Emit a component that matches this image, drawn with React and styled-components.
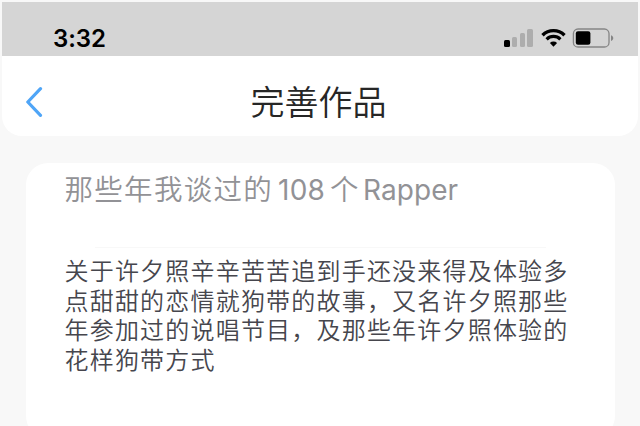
import React from 'react'
import styled, { createGlobalStyle } from "styled-components"


const GlobalStyle = createGlobalStyle`
    * {
        box-sizing: border-box;
    }
    body {
        margin: 0;
        overflow: hidden;
        background-color: #f8f8f8;
        font-family: Inter, "Noto Sans CJK SC", sans-serif;
    }
`;

const Screen = styled.div`
    height: 426px;
    padding: 2px 2px 0;
    overflow: hidden;
    background-color: #f8f8f8;
`;

const Top = styled.div`
    height: 134px;
    background-color: white;
    border-radius: 0 0 20px 20px;
`;

const StatusBar = styled.div`
    height: 54px;
    padding: 21px 24px 0 51px;
    display: flex;
    justify-content: space-between;
    background-color: #d5d5d5;
`;

const Time = styled.div`
    font-size: 24px;
    line-height: 32px;
    font-weight: 600;
    letter-spacing: -0.1px;
    color: black;
`;

const StatusIcons = styled.div`
    display: flex;
    align-items: flex-start;
    padding-top: 5px;
`;

const Signal = styled.div`
    height: 19px;
    display: flex;
    align-items: flex-end;
    gap: 2.2px;
    margin-right: 8px;
`;

const Bar = styled.div`
    width: 5.6px;
    height: ${props=>props.$height}px;
    border-radius: 1.5px;
    background-color: ${props=>props.$on ? "black" : "#adadad"};
`;

const Wifi = styled.svg`
    width: 25px;
    height: 19px;
    margin-right: 6px;
`;

const Battery = styled.svg`
    width: 42px;
    height: 20px;
`;

const NavBar = styled.div`
    height: 80px;
    padding: 0 24px;
    display: grid;
    grid-template-columns: 40px 1fr 40px;
    align-items: center;
`;

const Back = styled.svg`
    width: 18px;
    height: 32px;
    margin-top: 12px;
`;

const NavTitle = styled.h1`
    margin: 13px 3px 0 0;
    font-size: 34px;
    line-height: 44px;
    font-weight: 350;
    text-align: center;
    color: #262626;
`;

const Card = styled.div`
    height: 275px;
    margin: 27px 23.5px 0;
    padding: 0 39px;
    background-color: white;
    border-radius: 22px;
`;

const WorkTitle = styled.div`
    height: 84px;
    padding-top: 7px;
    font-size: 28.5px;
    line-height: 40px;
    font-weight: 350;
    letter-spacing: 1.3px;
    white-space: nowrap;
    color: #929296;
`;

const Latin = styled.span`
    margin: 0 ${props=>props.$after}px 0 ${props=>props.$before}px;
    font-family: Inter, sans-serif;
    font-size: 28px;
    font-weight: 400;
    letter-spacing: ${props=>props.$spacing}px;
`;

const Divider = styled.div`
    height: 1px;
    margin: 0 30px;
    background-color: #f8f8f8;
`;

const Summary = styled.p`
    margin: 9px 0 0;
    font-size: 24px;
    line-height: 29.7px;
    font-weight: 350;
    letter-spacing: 1.2px;
    white-space: nowrap;
    color: #46464d;
`;

const lines = [
    "关于许夕照辛辛苦苦追到手还没来得及体验多",
    "点甜甜的恋情就狗带的故事，又名许夕照那些",
    "年参加过的说唱节目，及那些年许夕照体验的",
    "花样狗带方式",
];


const App = () => {
  return (
    <Screen>
        <GlobalStyle/>
        <Top>
            <StatusBar>
                <Time>3:32</Time>
                <StatusIcons>
                    <Signal>
                        <Bar $height={7} $on/>
                        <Bar $height={10}/>
                        <Bar $height={14}/>
                        <Bar $height={18}/>
                    </Signal>
                    <Wifi viewBox="0 0 25 19" fill="none" stroke="black">
                        <path d="M1.5 7.2a15.6 15.6 0 0 1 22 0" strokeWidth="3.4"/>
                        <path d="M5.6 11.3a9.8 9.8 0 0 1 13.8 0" strokeWidth="3.2"/>
                        <path d="M8.9 15.1a5.1 5.1 0 0 1 7.2 0L12.5 18.7Z" fill="black" stroke="none"/>
                    </Wifi>
                    <Battery viewBox="0 0 42 20">
                        <rect x="1.4" y="1" width="35.6" height="18" rx="4.6" fill="none" stroke="#858585" strokeWidth="1.3"/>
                        <rect x="3.8" y="3.2" width="14.6" height="13.6" rx="2.2" fill="black"/>
                        <path d="M39 7.2c3 1.2 3 4.6 0 5.8z" fill="#858585"/>
                    </Battery>
                </StatusIcons>
            </StatusBar>
            <NavBar>
                <Back viewBox="0 0 18 32" fill="none" stroke="#4fa5f7" strokeWidth="3.2" strokeLinecap="round" strokeLinejoin="round">
                    <path d="M14.5 2.7 1.8 16 14.5 29.3"/>
                </Back>
                <NavTitle>完善作品</NavTitle>
            </NavBar>
        </Top>
        <Card>
            <WorkTitle>
                那些年我谈过的<Latin $spacing={0.2} $before={5} $after={5}>108</Latin>个<Latin $spacing={0.1} $before={3} $after={0}>Rapper</Latin>
            </WorkTitle>
            <Divider/>
            <Summary>
                {lines.map((line) => (
                    <React.Fragment key={line}>{line}<br/></React.Fragment>
                ))}
            </Summary>
        </Card>
    </Screen>
  )
}

export default App
